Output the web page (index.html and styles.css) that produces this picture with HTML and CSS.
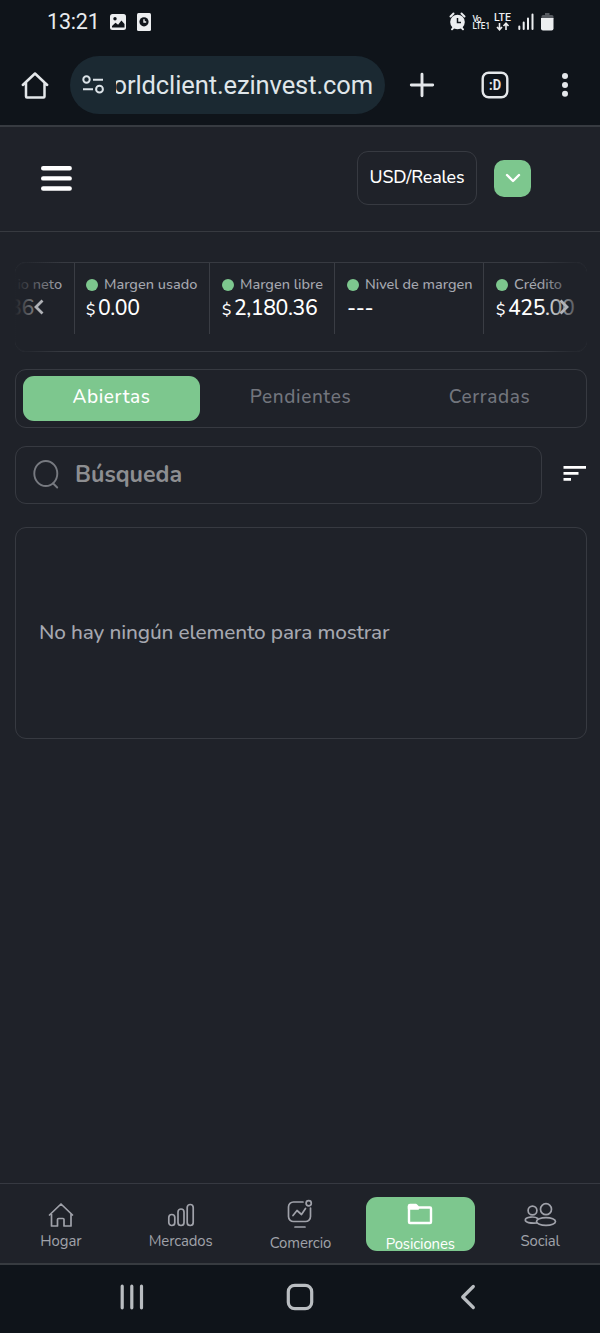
FILE: index.html
```html
<!DOCTYPE html>
<html lang="es">
<head>
<meta charset="utf-8">
<title>Posiciones</title>
<link rel="stylesheet" href="styles.css">
</head>
<body>
<div class="status">
  <span class="clock">13:21</span>
  <svg class="st-left" width="36" height="20" viewBox="0 0 36 20">
    <rect x="0" y="2" width="16" height="16" rx="2.5" fill="#eceef0"/>
    <circle cx="5" cy="6.8" r="1.7" fill="#0f141a"/>
    <path d="M2 15.5V14l3.5-3.3 2.6 2 3.3-4.2 3.1 3.4v3.6z" fill="#0f141a"/>
    <rect x="27" y="1" width="14" height="18" rx="1.5" fill="#eceef0"/>
    <circle cx="34" cy="9.800" r="4.600" fill="#0f141a"/>
    <path d="M34 7.200V10h2.200" fill="none" stroke="#eceef0" stroke-width="1.400"/>
  </svg>
  <svg class="st-right" width="108" height="22" viewBox="0 0 108 22">
    <g fill="none" stroke="#eceef0" stroke-width="2" stroke-linecap="round">
      <path d="M1.500 5.500l3-3M15.500 5.500l-3-3M3 18.300l2-2.300M14 18.300l-2-2.300"/>
    </g>
    <circle cx="8.500" cy="11" r="7.300" fill="#eceef0"/>
    <path d="M8.500 7v4.500h3.500" fill="none" stroke="#0f141a" stroke-width="1.500"/>
    <text class="tiny" x="23.500" y="10.500" textLength="9">Vo</text>
    <text class="tiny" x="23.500" y="18" textLength="17.500" lengthAdjust="spacingAndGlyphs">LTE1</text>
    <text class="lte" x="45" y="10.200" textLength="17">LTE</text>
    <path d="M50.500 12v6.500M48 16l2.500 2.700 2.500-2.700M57 19v-6.500M54.500 15l2.500-2.700 2.500 2.700" fill="none" stroke="#eceef0" stroke-width="1.600"/>
    <path d="M70.300 15.500V18M74.700 11.500V18M79 7.500V18M83.500 3.500V18" stroke="#eceef0" stroke-width="2" stroke-linecap="round"/>
    <path d="M96 2h4.500v2H103a1.500 1.500 0 0 1 1.500 1.500V8h-12V5.500A1.500 1.500 0 0 1 94 4h2z" fill="#55595f"/>
    <path d="M92 7h12.500v10.500a2 2 0 0 1-2 2H94a2 2 0 0 1-2-2z" fill="#eceef0"/>
  </svg>
</div>
<div class="browser">
  <svg class="b-home" width="28" height="28" viewBox="0 0 28 28" fill="none" stroke="#e4e7ea" stroke-width="2.500" stroke-linejoin="round" stroke-linecap="round"><path d="M1.800 14L14 2.500 26.200 14M5 11.500V25.500a1 1 0 0 0 1 1H22.500a1 1 0 0 0 1-1V11.500"/></svg>
  <div class="url">
    <svg width="24" height="20" viewBox="0 0 24 20" fill="none" stroke="#dbe2e7" stroke-width="2"><circle cx="4.500" cy="4.500" r="3.200"/><path d="M11 4.700H21M1 14.200h10"/><circle cx="17.500" cy="14.200" r="3.400"/></svg>
    <div class="urlclip"><span>orldclient.ezinvest.com</span></div>
  </div>
  <svg class="b-plus" width="26" height="26" viewBox="0 0 26 26" stroke="#e4e7ea" stroke-width="2.900" stroke-linecap="round"><path d="M13 2.300v21.400M2.300 13h21.400"/></svg>
  <svg class="b-tabs" width="28" height="28" viewBox="0 0 28 28"><rect x="1.700" y="1.700" width="24.600" height="24.600" rx="6" fill="none" stroke="#e4e7ea" stroke-width="2.400"/><text class="face" x="8" y="18.800" textLength="12" lengthAdjust="spacingAndGlyphs">:D</text></svg>
  <svg class="b-dots" width="8" height="26" viewBox="0 0 8 26" fill="#e4e7ea"><circle cx="4" cy="4" r="3"/><circle cx="4" cy="13" r="3"/><circle cx="4" cy="21.700" r="3"/></svg>
</div>
<header class="header">
  <svg width="32" height="26" viewBox="0 0 32 26" stroke="#fff" stroke-width="4.400" stroke-linecap="round"><path d="M3.200 3.300h26.500M3.200 13.400h26.500M3.200 23.500h26.500"/></svg>
  <div class="pair"><span>USD/Reales</span></div>
  <div class="drop"><svg width="16" height="12" viewBox="0 0 16 12" fill="none" stroke="#fff" stroke-width="2.400" stroke-linecap="round" stroke-linejoin="round"><path d="M2 3l6 6 6-6"/></svg></div>
</header>
<main class="main">
  <section class="stats">
    <div class="cell first"><p class="label">io neto</p><p class="val">36</p></div>
    <div class="cell c1"><p class="label"><i class="dot"></i><span>Margen usado</span></p><p class="val"><small>$</small>0.00</p></div>
    <div class="cell c2"><p class="label"><i class="dot"></i><span>Margen libre</span></p><p class="val"><small>$</small>2,180.36</p></div>
    <div class="cell c3"><p class="label"><i class="dot"></i><span>Nivel de margen</span></p><p class="val">---</p></div>
    <div class="cell c4"><p class="label"><i class="dot"></i><span>Crédito</span></p><p class="val"><small>$</small>425.00</p></div>
    <div class="fade left"><svg width="11" height="16" viewBox="0 0 11 16"><path d="M9.500 1.500L3 8l6.500 6.500"/></svg></div>
    <div class="fade right"><svg width="11" height="16" viewBox="0 0 11 16"><path d="M1.500 1.500L8 8l-6.500 6.500"/></svg></div>
  </section>
  <nav class="tabs"><span class="tab on">Abiertas</span><span class="tab">Pendientes</span><span class="tab">Cerradas</span></nav>
  <div class="row">
    <div class="search">
      <svg width="27" height="30" viewBox="0 0 27 30" fill="none" stroke="#777a80" stroke-width="1.900" stroke-linecap="round"><ellipse cx="12.800" cy="14.500" rx="11.500" ry="12.500"/><path d="M20.200 24.500l4 4"/></svg>
      <span>Búsqueda</span>
    </div>
    <svg class="sort" width="24" height="16" viewBox="0 0 24 16" fill="#fff"><path d="M.5 0H23v2.800H.5zM.5 6H15.500v2.800H.5zM.5 12H8v2.800H.5z"/></svg>
  </div>
  <section class="empty"><span>No hay ningún elemento para mostrar</span></section>
</main>
<nav class="bottom">
  <div class="item"><svg width="26" height="26" viewBox="0 0 26 26"><path d="M1.500 13L13 2l11.500 11M3.500 12v12h6v-6.500a1 1 0 0 1 1-1h4.500a1 1 0 0 1 1 1V24h7V12"/></svg><span>Hogar</span></div>
  <div class="item"><svg width="28" height="26" viewBox="0 0 28 26"><rect x="1.800" y="12.500" width="6" height="11" rx="3"/><rect x="11" y="7" width="6" height="16.500" rx="3"/><rect x="20.200" y="2.500" width="6" height="21" rx="3"/></svg><span>Mercados</span></div>
  <div class="item comercio"><svg width="28" height="28" viewBox="0 0 28 28"><path d="M17 3H7.500a5 5 0 0 0-5 5v9.500a5 5 0 0 0 5 5h12a5 5 0 0 0 5-5V9M9 28h10M7 16.500l4-5 4.500 4 4-6"/><circle cx="22.700" cy="4.200" r="2.600"/></svg><span>Comercio</span></div>
  <div class="item posiciones"><svg width="26" height="22" viewBox="0 0 26 22"><path d="M2 19V3q0-1 1-1h6l2.500 2.500H23q1 0 1 1V19q0 1-1 1H3q-1 0-1-1z"/><path d="M2 3h7l2 2.500H2z" fill="#fff"/></svg><span>Posiciones</span></div>
  <div class="item"><svg width="34" height="26" viewBox="0 0 34 26"><circle cx="9.500" cy="8.500" r="4.400"/><circle cx="23" cy="7.200" r="5.500"/><ellipse cx="23" cy="19.500" rx="9.500" ry="3.900"/><path d="M13.500 21C7 21.300 2.300 20.500 2.300 18c0-3.700 10-3.700 12.500-1.500"/></svg><span>Social</span></div>
</nav>
<div class="system">
  <svg width="26" height="28" viewBox="0 0 26 28"><path d="M3.200 3.200v21.600M12.800 3.200v21.600M22.500 3.200v21.600"/></svg>
  <svg class="s-home" width="28" height="28" viewBox="0 0 28 28"><rect x="2.300" y="2.300" width="23.400" height="23.400" rx="6.500"/></svg>
  <svg class="s-back" width="16" height="28" viewBox="0 0 16 28"><path d="M13.300 3.500L2.700 14l10.600 10.500"/></svg>
</div>
</body>
</html>
```
FILE: styles.css
```css
* { box-sizing: border-box; }
body {
  margin: 0;
  width: 600px;
  height: 1333px;
  overflow: hidden;
  display: flex;
  flex-direction: column;
  background: #1f2229;
  color: #fff;
  font-family: Nunito, Lato, "Open Sans", sans-serif;
}
p { margin: 0; }
svg { display: block; flex: none; overflow: visible; }

.status {
  height: 44px;
  padding: 0 43px 0 47px;
  display: flex;
  align-items: center;
  background: #0f141a;
  font-family: Roboto, sans-serif;
}
.clock { width: 63px; padding-bottom: 1px; font-size: 21.5px; letter-spacing: -0.2px; color: #e8ebee; }
.st-right { margin-left: auto; }
.tiny { font: 500 8.5px Roboto, sans-serif; fill: #eceef0; }
.lte { font: 500 10.500px Roboto, sans-serif; fill: #eceef0; }
.face { font: 700 14px Roboto, sans-serif; fill: #e4e7ea; }

.browser {
  height: 83px;
  padding: 0 31px 0 21px;
  display: flex;
  align-items: center;
  background: #0f141a;
  border-bottom: 2px solid #373b41;
}
.url {
  width: 315px;
  height: 58px;
  margin-left: 21px;
  padding-left: 12px;
  display: flex;
  align-items: center;
  border-radius: 29px;
  background: #1b2932;
}
.urlclip { width: 257px; margin: 1px 0 0 10px; overflow: hidden; display: flex; justify-content: flex-end; }
.urlclip span { font: 25.5px/36px Roboto, sans-serif; letter-spacing: -0.1px; color: #dfe5e9; white-space: nowrap; }
.b-plus { margin-left: 24px; }
.b-tabs { margin-left: 46px; }
.b-dots { margin-left: auto; }

.header {
  height: 105px;
  padding: 0 69px 2px 40px;
  display: flex;
  align-items: center;
  border-bottom: 1px solid #373a40;
}
.pair {
  width: 120px;
  height: 54px;
  margin-left: auto;
  padding-bottom: 2px;
  display: flex;
  align-items: center;
  justify-content: center;
  border: 1px solid #373a41;
  border-radius: 11px;
  font-size: 17.8px;
  font-weight: 500;
  letter-spacing: -0.15px;
}
.drop {
  width: 37px;
  height: 37px;
  margin-left: 17px;
  display: flex;
  align-items: center;
  justify-content: center;
  border-radius: 10px;
  background: #7dc78e;
}

.main { flex: 1; padding: 30px 13px 0 15px; }
.stats {
  position: relative;
  width: 572px;
  height: 90px;
  padding: 1px;
  display: flex;
  align-items: flex-start;
  overflow: hidden;
  box-shadow: inset 0 0 0 1px #373a41;
  border-radius: 11px;
  white-space: nowrap;
}
.cell { height: 71px; padding: 12px 0 0 11px; border-left: 1px solid #3a3d44; flex: none; }
.first { width: 58px; padding: 12px 12px 0 0; border: 0; display: flex; flex-direction: column; align-items: flex-end; }
.first .val { width: 100%; padding-right: 28px; display: flex; justify-content: flex-end; }
.c1 { width: 135px; }
.c2 { width: 125px; padding-left: 12px; }
.c3 { width: 149px; padding-left: 12px; }
.c4 { width: 103px; padding-left: 12px; }
.label { display: flex; align-items: center; height: 19px; font-size: 14.5px; font-weight: 500; line-height: 19px; color: #a6a8b0; }
.dot { width: 12px; height: 12px; margin-right: 6px; border-radius: 50%; background: #7dc78e; }
.val { height: 28px; font-size: 21.3px; font-weight: 500; line-height: 28px; letter-spacing: -0.4px; }
.val small { font-size: 15.5px; margin-right: 3px; }
.fade { position: absolute; top: 0; width: 48px; height: 90px; }
.fade svg { position: absolute; top: 37px; fill: none; stroke: #b0b2b7; stroke-width: 2.800; }
.left { left: 0; background: linear-gradient(90deg, #1f2229, rgba(31, 34, 41, 0)); }
.left svg { left: 18px; }
.right { right: 0; background: linear-gradient(270deg, #1f2229, rgba(31, 34, 41, 0)); }
.right svg { right: 17px; }

.tabs {
  width: 572px;
  height: 59px;
  margin-top: 17px;
  padding: 6px 7px;
  display: flex;
  gap: 12px;
  border: 1px solid #373a41;
  border-radius: 11px;
}
.tab { width: 177px; height: 45px; font-size: 19px; font-weight: 500; line-height: 43px; letter-spacing: 0.6px; text-align: center; color: #72757d; }
.on { color: #fff; background: #7dc78e; border-radius: 11px; }

.row { display: flex; align-items: center; margin-top: 18px; }
.search {
  width: 527px;
  height: 58px;
  padding: 0 17px 2px;
  display: flex;
  align-items: center;
  gap: 15px;
  border: 1px solid #373a41;
  border-radius: 11px;
  color: #8d8e91;
  font-size: 23.2px;
  font-weight: 700;
}
.sort { margin: 0 0 3px 21px; }
.empty {
  width: 572px;
  height: 212px;
  margin-top: 23px;
  padding: 0 0 2px 23px;
  display: flex;
  align-items: center;
  border: 1px solid #373a41;
  border-radius: 11px;
  font-size: 20.8px;
  font-weight: 500;
  letter-spacing: -0.15px;
  color: #a6a8b0;
}

.bottom {
  height: 80px;
  padding-left: 1px;
  display: flex;
  border-top: 1px solid #363941;
  color: #a0a2aa;
}
.item { width: 120px; padding-top: 18px; display: flex; flex-direction: column; align-items: center; font-size: 14.9px; line-height: 20px; letter-spacing: -0.1px; }
.item svg { fill: none; stroke: #a0a2aa; stroke-width: 1.700; stroke-linejoin: round; stroke-linecap: round; }
.item span { margin-top: 3px; }
.comercio { padding-top: 15px; }
.comercio span { margin-top: 6px; }
.posiciones { width: 109px; height: 54px; margin: 13px 5.600px 0; padding-top: 6px; border-radius: 11px; background: #7dc78e; color: #fff; }
.posiciones svg { stroke: #fff; stroke-width: 2.400; }
.posiciones span { margin-top: 9px; }
.system {
  height: 70px;
  padding: 0 0 4px 119px;
  display: flex;
  align-items: center;
  border-top: 2px solid #373b40;
  background: #0f141a;
}
.system svg { fill: none; stroke: #b9bdc1; stroke-width: 3.200; stroke-linecap: round; stroke-linejoin: round; }
.s-home { margin-left: 141px; }
.s-back { margin-left: 146px; }
```
